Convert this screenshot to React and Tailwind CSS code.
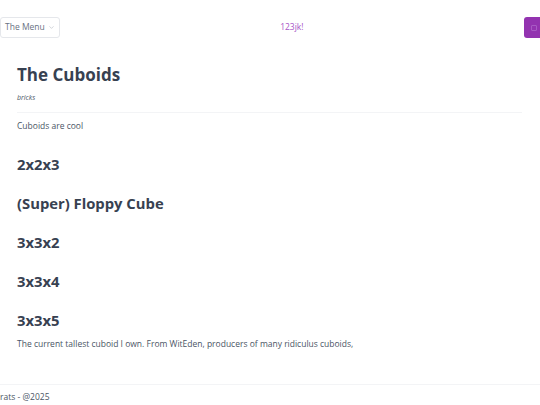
import { ChevronDown } from "lucide-react"

const models = ["2x2x3", "(Super) Floppy Cube", "3x3x2", "3x3x4", "3x3x5"]

function Nav() {
  return (
    <nav className="h-[55px] flex items-center">
      <button className="h-[21px] flex items-center gap-[3px] px-[4px] border border-gray-200 rounded-[3px] text-[8.5px] text-gray-500 bg-white">
        <span>The Menu</span>
        <ChevronDown className="w-[7px] h-[7px] text-gray-400" strokeWidth={1.5} />
      </button>
      <div className="flex-1 text-center text-[8.5px] text-[#a855c8]">123jk!</div>
      <button className="w-[20px] h-[21px] shrink-0 mr-[-4px] rounded-[3px] bg-[#9333b0] flex items-center justify-center">
        <span className="w-[6px] h-[6px] rounded-[1px] border border-[#a85ac4]" />
      </button>
    </nav>
  )
}

export default function App() {
  return (
    <div className="w-[540px] h-[405px] overflow-hidden bg-white flex flex-col" style={{ fontFamily: '"Open Sans", "Noto Sans", sans-serif' }}>
      <Nav />
      <main className="flex-1 px-[17px]">
        <h1 className="mt-[10px] text-[17px] leading-[20px] font-bold text-[#374151]">The Cuboids</h1>
        <p className="mt-[9px] text-[7px] leading-[8px] italic text-gray-600">bricks</p>
        <hr className="mt-[10px] mr-[1px] border-t border-gray-100" />
        <p className="mt-[7px] text-[8.5px] leading-[12px] text-gray-600">Cuboids are cool</p>
        {models.map((m, i) => (
          <h2 key={m} className={`${i === 0 ? "mt-[22px]" : "mt-[19px]"} text-[14.8px] leading-[20px] font-bold text-[#374151]`}>{m}</h2>
        ))}
        <p className="mt-[8px] text-[8.5px] leading-[12px] text-gray-600">
          The current tallest cuboid I own. From WitEden, producers of many ridiculus cuboids,
        </p>
      </main>
      <footer className="h-[21px] border-t border-gray-100 text-[8.5px] leading-[20px] text-gray-600 pt-[2px]">
        rats - @2025
      </footer>
    </div>
  )
}
